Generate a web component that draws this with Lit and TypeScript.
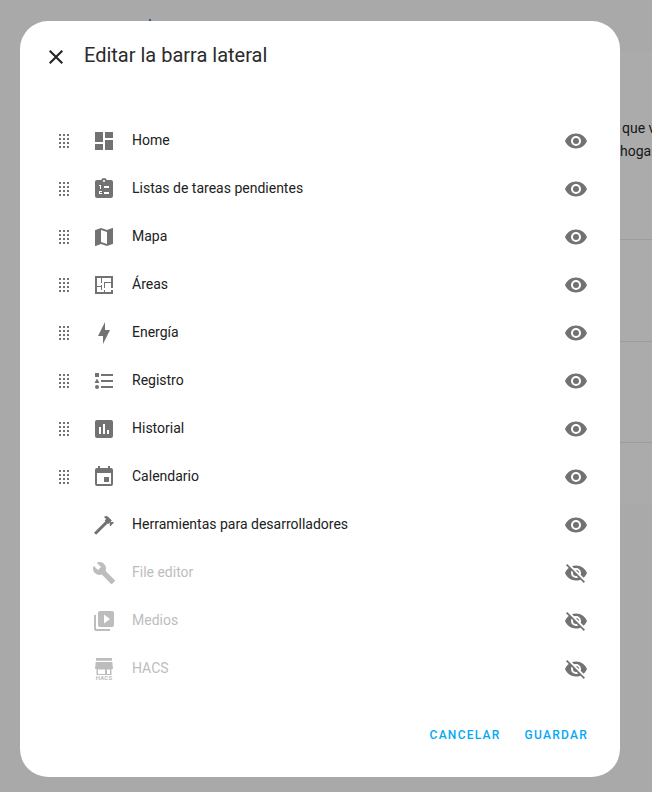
import { LitElement, html, css, svg } from "lit";
import { customElement } from "lit/decorators.js";

const P: Record<string, string> = {
  home: "M13,3V9H21V3M13,21H21V11H13M3,21H11V15H3M3,13H11V3H3V13Z",
  todo: "M19 3H14.82C14.4 1.84 13.3 1 12 1S9.6 1.84 9.18 3H5C3.9 3 3 3.9 3 5V19C3 20.1 3.9 21 5 21H19C20.1 21 21 20.1 21 19V5C21 3.9 20.1 3 19 3M12 3C12.55 3 13 3.45 13 4S12.55 5 12 5 11 4.55 11 4 11.45 3 12 3M12 9H17V11H12V9M12 15H17V17H12V15M7 8H9V12H8V9H7V8M7 14H10V15H8V16H10V17H7V14Z",
  map: "M15,19L9,16.89V5L15,7.11M20.5,3C20.44,3 20.39,3 20.34,3L15,5.1L9,3L3.36,4.9C3.15,4.97 3,5.15 3,5.38V20.5A0.5,0.5 0 0,0 3.5,21C3.55,21 3.61,21 3.66,20.97L9,18.9L15,21L20.64,19.1C20.85,19 21,18.85 21,18.62V3.5A0.5,0.5 0 0,0 20.5,3Z",
  floor: "M10,5V10H9V5H5V13H9V12H10V17H9V14H5V19H12V17H13V19H19V17H21V21H3V3H21V15H19V10H13V15H12V9H19V5H10Z",
  bolt: "M11 15H6L13 1V9H18L11 23V15Z",
  log: "M5,9.5L7.5,14H2.5L5,9.5M3,4H7V8H3V4M5,20A2,2 0 0,0 7,18A2,2 0 0,0 5,16A2,2 0 0,0 3,18A2,2 0 0,0 5,20M9,5V7H21V5H9M9,19H21V17H9V19M9,13H21V11H9V13Z",
  chart: "M19 3H5C3.9 3 3 3.9 3 5V19C3 20.1 3.9 21 5 21H19C20.1 21 21 20.1 21 19V5C21 3.9 20.1 3 19 3M9 17H7V10H9V17M13 17H11V7H13V17M17 17H15V13H17V17Z",
  cal: "M19,19H5V8H19M16,1V3H8V1H6V3H5C3.89,3 3,3.89 3,5V19A2,2 0 0,0 5,21H19A2,2 0 0,0 21,19V5C21,3.89 20.1,3 19,3H18V1M17,12H12V17H17V12Z",
  hammer: "M2 19.63L13.43 8.2L12.72 7.5L14.14 6.07L12 3.89C13.2 2.7 15.09 2.7 16.27 3.89L19.87 7.5L18.45 8.91H21.29L22 9.62L18.45 13.21L17.74 12.5V9.62L16.27 11.09L15.56 10.38L4.13 21.8L2 19.63Z",
  wrench: "M22.7,19L13.6,9.9C14.5,7.6 14,4.9 12.1,3C10.1,1 7.1,0.6 4.7,1.7L9,6L6,9L1.6,4.7C0.4,7.1 0.9,10.1 2.9,12.1C4.8,14 7.5,14.5 9.8,13.6L18.9,22.7C19.3,23.1 19.9,23.1 20.3,22.7L22.6,20.4C23.1,20 23.1,19.3 22.7,19Z",
  media: "M4,6H2V20A2,2 0 0,0 4,22H18V20H4V6M20,2H8A2,2 0 0,0 6,4V16A2,2 0 0,0 8,18H20A2,2 0 0,0 22,16V4A2,2 0 0,0 20,2M12,14.5V5.5L18,10L12,14.5Z",
  hacs: "M4 1H20V3.7H4V1M3.7 5H20.3L21 12H19.5V18H4.5V12H3L3.7 5M6 12.5V17H13V12.5H6M15 12.5V17H18V12.5H15Z",
  eye: "M12,9A3,3 0 0,0 9,12A3,3 0 0,0 12,15A3,3 0 0,0 15,12A3,3 0 0,0 12,9M12,17A5,5 0 0,1 7,12A5,5 0 0,1 12,7A5,5 0 0,1 17,12A5,5 0 0,1 12,17M12,4.5C7,4.5 2.73,7.61 1,12C2.73,16.39 7,19.5 12,19.5C17,19.5 21.27,16.39 23,12C21.27,7.61 17,4.5 12,4.5Z",
  eyeoff: "M11.83,9L15,12.16C15,12.11 15,12.05 15,12A3,3 0 0,0 12,9C11.94,9 11.89,9 11.83,9M7.53,9.8L9.08,11.35C9.03,11.56 9,11.77 9,12A3,3 0 0,0 12,15C12.22,15 12.44,14.97 12.65,14.92L14.2,16.47C13.53,16.8 12.79,17 12,17A5,5 0 0,1 7,12C7,11.21 7.2,10.47 7.53,9.8M2,4.27L4.28,6.55L4.73,7C3.08,8.3 1.78,10 1,12C2.73,16.39 7,19.5 12,19.5C13.55,19.5 15.03,19.2 16.38,18.66L16.81,19.08L19.73,22L21,20.73L3.27,3M12,7A5,5 0 0,1 17,12C17,12.64 16.87,13.26 16.64,13.82L19.57,16.75C21.07,15.5 22.27,13.86 23,12C21.27,7.61 17,4.5 12,4.5C10.6,4.5 9.26,4.75 8,5.2L10.17,7.35C10.74,7.13 11.35,7 12,7Z",
  close: "M19,6.41L17.59,5L12,10.59L6.41,5L5,6.41L10.59,12L5,17.59L6.41,19L12,13.41L17.59,19L19,17.59L13.41,12L19,6.41Z",
};

type Item = { label: string; icon: string; drag?: boolean; off?: boolean };
const ITEMS: Item[] = [
  { label: "Home", icon: "home", drag: true },
  { label: "Listas de tareas pendientes", icon: "todo", drag: true },
  { label: "Mapa", icon: "map", drag: true },
  { label: "Áreas", icon: "floor", drag: true },
  { label: "Energía", icon: "bolt", drag: true },
  { label: "Registro", icon: "log", drag: true },
  { label: "Historial", icon: "chart", drag: true },
  { label: "Calendario", icon: "cal", drag: true },
  { label: "Herramientas para desarrolladores", icon: "hammer" },
  { label: "File editor", icon: "wrench", off: true },
  { label: "Medios", icon: "media", off: true },
  { label: "HACS", icon: "hacs", off: true },
];

const icon = (name: string) =>
  svg`<svg class="ic" viewBox="0 0 24 24" width="24" height="24"><path d=${P[name]} fill="currentColor" fill-rule="evenodd"></path>${
    name === "hacs"
      ? svg`<text x="12" y="23.2" text-anchor="middle" font-size="6" font-weight="700" letter-spacing="0.2" font-family="Roboto, sans-serif" fill="currentColor">HACS</text>`
      : ""
  }</svg>`;

const dragDots = () => {
  const dots = [];
  for (let r = 0; r < 4; r++)
    for (let c = 0; c < 3; c++)
      dots.push(svg`<rect x=${7 + c * 4} y=${5 + r * 4} width="2" height="2"></rect>`);
  return svg`<svg class="ic" viewBox="0 0 24 24" width="24" height="24" fill="currentColor">${dots}</svg>`;
};

@customElement("app-root")
export class AppRoot extends LitElement {
  static styles = css`
    :host {
      display: block;
      position: relative;
      width: 652px;
      height: 792px;
      overflow: hidden;
      background: #a9a9a9;
      font-family: Roboto, sans-serif;
    }
    .page {
      height: 100%;
      display: flex;
      flex-direction: column;
      align-items: flex-end;
      padding-top: 52px;
      box-sizing: border-box;
    }
    .card {
      width: 100px;
      height: 453px;
      background: #ababab;
      color: #171717;
      font-size: 14px;
      line-height: 23px;
      box-sizing: border-box;
    }
    .bgtext {
      padding-top: 65px;
      white-space: nowrap;
      display: flex;
      flex-direction: column;
      align-items: flex-start;
    }
    .bgtext span:first-child {
      padding-left: 70px;
    }
    .bgtext span:last-child {
      padding-left: 68px;
    }
    .sep {
      height: 1px;
      background: #9d9d9d;
      position: absolute;
      left: 600px;
      right: 0;
    }
    .tick {
      position: absolute;
      left: 149px;
      top: 19px;
      width: 2px;
      height: 2px;
      background: #2a5f94;
    }
    .dialog {
      position: absolute;
      left: 20px;
      top: 21px;
      width: 600px;
      height: 756px;
      background: #fff;
      border-radius: 28px;
      display: flex;
      flex-direction: column;
      box-sizing: border-box;
    }
    .head {
      display: flex;
      align-items: center;
      height: 24px;
      padding: 24px 24px 0 24px;
      gap: 16px;
      color: #212121;
    }
    .head .ic {
      flex: none;
    }
    .title {
      font-size: 20px;
      line-height: 24px;
      margin-top: -4px;
      color: #2b2b2b;
    }
    .list {
      margin-top: 47px;
      padding: 0 32px;
    }
    .row {
      display: flex;
      align-items: center;
      height: 48px;
      color: #212121;
      font-size: 14px;
    }
    .row.off {
      color: #bdbdbd;
    }
    .slot {
      width: 24px;
      height: 24px;
      flex: none;
      margin-top: 2px;
      color: #727272;
    }
    .off .main {
      color: #bdbdbd;
    }
    .main {
      margin-left: 16px;
      color: #727272;
    }
    .label {
      flex: 1;
      margin-left: 16px;
    }
    .ic {
      display: block;
    }
    .foot {
      margin-top: auto;
      display: flex;
      justify-content: flex-end;
      gap: 24px;
      padding: 0 32px 35px;
      color: #03a9f4;
      font-size: 12px;
      font-weight: 500;
      letter-spacing: 1.25px;
      line-height: 14px;
    }
  `;

  render() {
    return html`
      <div class="page">
        <div class="card">
          <div class="bgtext"><span>que v</span><span>hogar</span></div>
        </div>
      </div>
      <div class="tick"></div>
      <div class="sep" style="top:239px"></div>
      <div class="sep" style="top:341px"></div>
      <div class="sep" style="top:442px"></div>
      <div class="dialog">
        <div class="head">${icon("close")}<div class="title">Editar la barra lateral</div></div>
        <div class="list">
          ${ITEMS.map(
            (i) => html`<div class="row ${i.off ? "off" : ""}">
              <div class="slot">${i.drag ? dragDots() : ""}</div>
              <div class="slot main">${icon(i.icon)}</div>
              <div class="label">${i.label}</div>
              <div class="slot">${icon(i.off ? "eyeoff" : "eye")}</div>
            </div>`
          )}
        </div>
        <div class="foot"><span>CANCELAR</span><span>GUARDAR</span></div>
      </div>
    `;
  }
}
